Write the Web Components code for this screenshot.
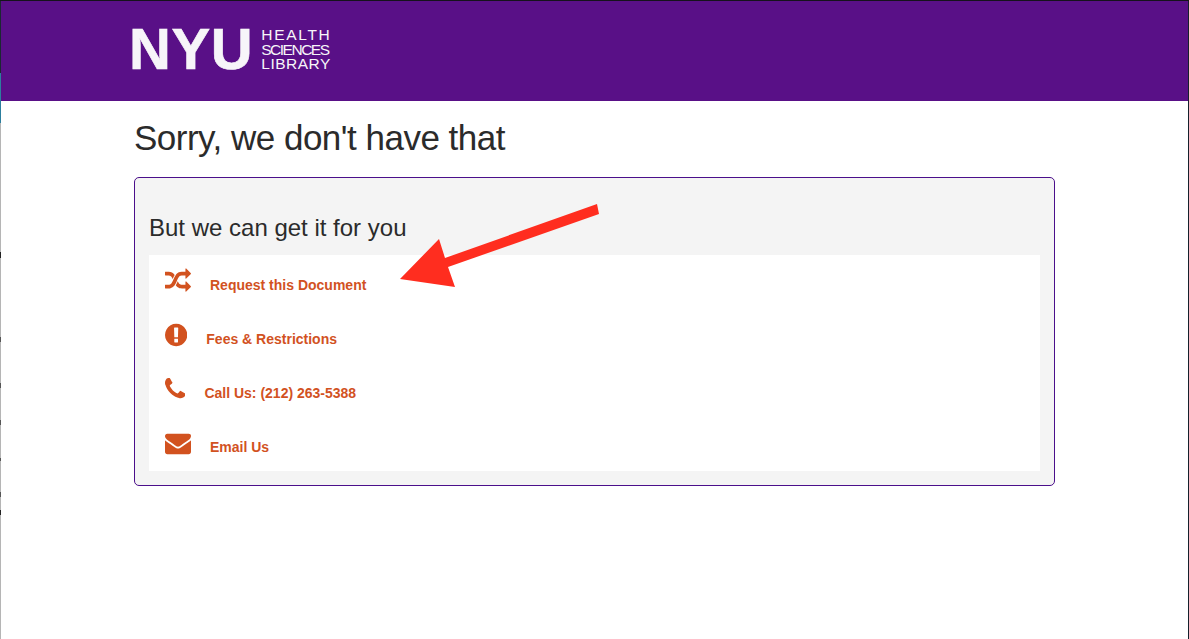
<!DOCTYPE html>
<html lang="en">
<head>
<meta charset="utf-8">
<title>Sorry, we don't have that</title>
<style>
    html, body { margin: 0; height: 100%; background: #fff; }
    body { font-family: "Liberation Sans", Arial, sans-serif; overflow: hidden; }
</style>
</head>
<body>
<library-page>
    <library-header slot="header"></library-header>
    <h1 slot="title">Sorry, we don't have that</h1>
    <help-panel heading="But we can get it for you">
        <help-link icon="random" href="#">Request this Document</help-link>
        <help-link icon="exclamation" href="#">Fees &amp; Restrictions</help-link>
        <help-link icon="phone" href="#">Call Us: (212) 263-5388</help-link>
        <help-link icon="envelope" href="#">Email Us</help-link>
    </help-panel>
    <call-out-arrow></call-out-arrow>
</library-page>

<script>
// Left window edge of the capture: colour bands and the small dark ticks, [from, to, colour]
const EDGE_BANDS = [
    [0, 73, '#1c2833'], [73, 123, '#2c7f9e'], [123, 252, '#b5b5b5'], [252, 258, '#222'],
    [258, 337, '#b5b5b5'], [337, 342, '#555'], [342, 383, '#b5b5b5'], [383, 388, '#555'],
    [388, 420, '#b5b5b5'], [420, 425, '#555'], [425, 458, '#b5b5b5'], [458, 461, '#555'],
    [461, 492, '#b5b5b5'], [492, 497, '#555'], [497, 510, '#b5b5b5'], [510, 515, '#222'],
    [515, 639, '#b5b5b5']
];
const edgeGradient = EDGE_BANDS.map(([a, b, c]) => `${c} ${a}px ${b}px`).join(', ');

/* Page frame: window edge, header slot, then the centred content column. */
class LibraryPage extends HTMLElement {
    constructor() {
        super();
        const shadow = this.attachShadow({ mode: 'open' });
        shadow.innerHTML = `
            <style>
                :host {
                    display: block;
                    height: 639px;
                    box-sizing: border-box;
                    padding: 1px 1px 0 1px;
                    position: relative;
                    background:
                        linear-gradient(#15121c, #15121c) 0 0 / 100% 1px no-repeat,
                        linear-gradient(to bottom, ${edgeGradient}) 0 0 / 1px 100% no-repeat,
                        linear-gradient(#14202c, #14202c) 100% 0 / 1px 100% no-repeat;
                }
                .content { padding: 0 133px; }
                ::slotted(h1) {
                    margin: 0;
                    padding-top: 16px;
                    height: 60px;
                    font-size: 35px;
                    line-height: 42px;
                    font-weight: 400;
                    color: #2b2b2b;
                    letter-spacing: -0.5px;
                }
            </style>
            <slot name="header"></slot>
            <div class="content">
                <slot name="title"></slot>
                <slot></slot>
            </div>
        `;
    }
}
customElements.define('library-page', LibraryPage);

class LibraryHeader extends HTMLElement {
    constructor() {
        super();
        const shadow = this.attachShadow({ mode: 'open' });
        shadow.innerHTML = `
            <style>
                :host {
                    display: flex;
                    height: 100px;
                    background: #591087;
                    padding: 27px 0 0 128px;
                    box-sizing: border-box;
                    color: #f7f5f9;
                }
                .logo { display: flex; gap: 8px; height: 42px; }
                .nyu {
                    font-size: 58px;
                    line-height: 42px;
                    font-weight: 700;
                    letter-spacing: 0.6px;
                    -webkit-text-stroke: 0.6px #f7f5f9;
                }
                .sub {
                    display: flex;
                    flex-direction: column;
                    justify-content: space-between;
                    font-size: 15.5px;
                    line-height: 13px;
                }
                .health { letter-spacing: 1.7px; }
                .sciences { letter-spacing: -1.5px; }
                .library { letter-spacing: 0.5px; }
            </style>
            <div class="logo">
                <div class="nyu">NYU</div>
                <div class="sub">
                    <span class="health">HEALTH</span>
                    <span class="sciences">SCIENCES</span>
                    <span class="library">LIBRARY</span>
                </div>
            </div>
        `;
    }
}
customElements.define('library-header', LibraryHeader);

class HelpPanel extends HTMLElement {
    constructor() {
        super();
        const shadow = this.attachShadow({ mode: 'open' });
        shadow.innerHTML = `
            <style>
                :host {
                    display: block;
                    width: 921px;
                    height: 309px;
                    box-sizing: border-box;
                    border: 1px solid #4b0f8b;
                    border-radius: 5px;
                    background: #f4f4f4;
                    padding: 34px 14px 14px;
                }
                h2 {
                    margin: 0;
                    height: 43px;
                    font-size: 24px;
                    line-height: 32px;
                    font-weight: 400;
                    color: #2b2b2b;
                }
                .list { background: #fff; padding: 0 16px; }
            </style>
            <h2></h2>
            <div class="list"><slot></slot></div>
        `;
        this._heading = shadow.querySelector('h2');
    }

    connectedCallback() {
        this._heading.textContent = this.getAttribute('heading');
    }
}
customElements.define('help-panel', HelpPanel);

// Font Awesome style glyphs, viewBox cropped to each glyph's advance width
const ICONS = {
    random: {
        box: '0 0 1792 1792', w: 26,
        d: 'M666 481q-60 92-137 273-22-45-37-72.5t-40.5-63.5-51-56.5-63-35-81.5-14.5h-224q-14 0-23-9t-9-23v-192q0-14 9-23t23-9h224q250 0 410 225zm1126 799q0 14-9 23l-320 320q-9 9-23 9-13 0-22.5-9.5t-9.5-22.5v-192q-32 0-85 .5t-81 1-73-1-71-5-64-10.5-63-18.5-58-28.5-59-40-55-53.5-56-69.5q59-93 136-273 22 45 37 72.5t40.5 63.5 51 56.5 63 35 81.5 14.5h256v-192q0-14 9-23t23-9q12 0 24 10l319 319q9 9 9 23zm0-896q0 14-9 23l-320 320q-9 9-23 9-13 0-22.5-9.5t-9.5-22.5v-192h-256q-48 0-87 15t-69 45-51 61.5-45 77.5q-32 62-78 171-29 66-49.5 111t-54 105-64 100-74 83-90 68.5-106.5 42-128 16.5h-224q-14 0-23-9t-9-23v-192q0-14 9-23t23-9h224q48 0 87-15t69-45 51-61.5 45-77.5q32-62 78-171 29-66 49.5-111t54-105 64-100 74-83 90-68.5 106.5-42 128-16.5h256v-192q0-14 9-23t23-9q12 0 24 10l319 319q9 9 9 23z'
    },
    exclamation: {
        box: '128 0 1536 1792', w: 22.3,
        d: 'M896 128q209 0 385.5 103t279.5 279.5 103 385.5-103 385.5-279.5 279.5-385.5 103-385.5-103-279.5-279.5-103-385.5 103-385.5 279.5-279.5 385.5-103zm128 1247v-190q0-14-9-23.5t-22-9.5h-192q-13 0-23 10t-10 23v190q0 13 10 23t23 10h192q13 0 22-9.5t9-23.5zm-2-344l18-621q0-12-10-18-10-8-24-8h-220q-14 0-24 8-10 6-10 18l17 621q0 10 10 17.5t24 7.5h185q14 0 23.5-7.5t10.5-17.5z'
    },
    phone: {
        box: '192 0 1408 1792', w: 20.4,
        d: 'M1600 1240q0 27-10 70.5t-21 68.5q-21 50-122 106-94 51-186 51-27 0-53-3.5t-57.5-12.5-47-14.5-55.5-20.5-49-18q-98-35-175-83-127-79-264-216t-216-264q-48-77-83-175-3-9-18-49t-20.5-55.5-14.5-47-12.5-57.5-3.5-53q0-92 51-186 56-101 106-122 25-11 68.5-21t70.5-10q14 0 21 3 18 6 53 76 11 19 30 54t35 63.5 31 53.5q3 4 17.5 25t21.5 35.5 7 28.5q0 20-28.5 50t-62 55-62 53-28.5 46q0 9 5 22.5t8.5 20.5 14 24 11.5 19q76 137 174 235t235 174q2 1 19 11.5t24 14 20.5 8.5 22.5 5q18 0 46-28.5t53-62 55-62 50-28.5q14 0 28.5 7t35.5 21.5 25 17.5q25 15 53.5 31t63.5 35 54 30q70 35 76 53 3 7 3 21z'
    },
    envelope: {
        box: '0 0 1792 1792', w: 26,
        d: 'M1792 710v794q0 66-47 113t-113 47h-1472q-66 0-113-47t-47-113v-794q44 49 101 87 362 246 497 345 57 42 92.5 65.5t94.5 48 110 24.5h2q51 0 110-24.5t94.5-48 92.5-65.5q170-123 498-345 57-39 100-87zm0-294q0 79-49 151t-122 123q-376 261-468 325-10 7-42.5 30.5t-54 38-52 32.5-57.5 27-50 9h-2q-23 0-50-9t-57.5-27-52-32.5-54-38-42.5-30.5q-91-64-262-182.5t-205-142.5q-62-42-117-115.5t-55-136.5q0-78 41.5-130t118.5-52h1472q65 0 112.5 45t47.5 111z'
    }
};

class HelpLink extends HTMLElement {
    constructor() {
        super();
        this.attachShadow({ mode: 'open' });
    }

    connectedCallback() {
        const icon = ICONS[this.getAttribute('icon')];
        this.shadowRoot.innerHTML = `
            <style>
                :host { display: block; }
                a {
                    display: flex;
                    align-items: center;
                    gap: 19px;
                    height: 54px;
                    box-sizing: border-box;
                    padding-top: 6px;
                    color: #d2521f;
                    font-size: 14px;
                    font-weight: 700;
                    text-decoration: none;
                }
                svg { display: block; height: 26px; margin-bottom: 9px; fill: currentColor; }
            </style>
            <a href="${this.getAttribute('href')}">
                <svg viewBox="${icon.box}" width="${icon.w}"><path d="${icon.d}"/></svg>
                <span><slot></slot></span>
            </a>
        `;
    }
}
customElements.define('help-link', HelpLink);

// Annotation drawn over the screenshot, so it sits on a free canvas
class CallOutArrow extends HTMLElement {
    constructor() {
        super();
        const shadow = this.attachShadow({ mode: 'open' });
        shadow.innerHTML = `
            <style>
                :host { position: absolute; left: 398px; top: 203px; width: 204px; height: 86px; }
                svg { display: block; }
            </style>
            <svg width="204" height="86" viewBox="398 203 204 86">
                <polygon fill="#ff2d1f" points="597,204 599,214 448,267 455,287 400,279 439,239 445,258"/>
            </svg>
        `;
    }
}
customElements.define('call-out-arrow', CallOutArrow);
</script>
</body>
</html>
